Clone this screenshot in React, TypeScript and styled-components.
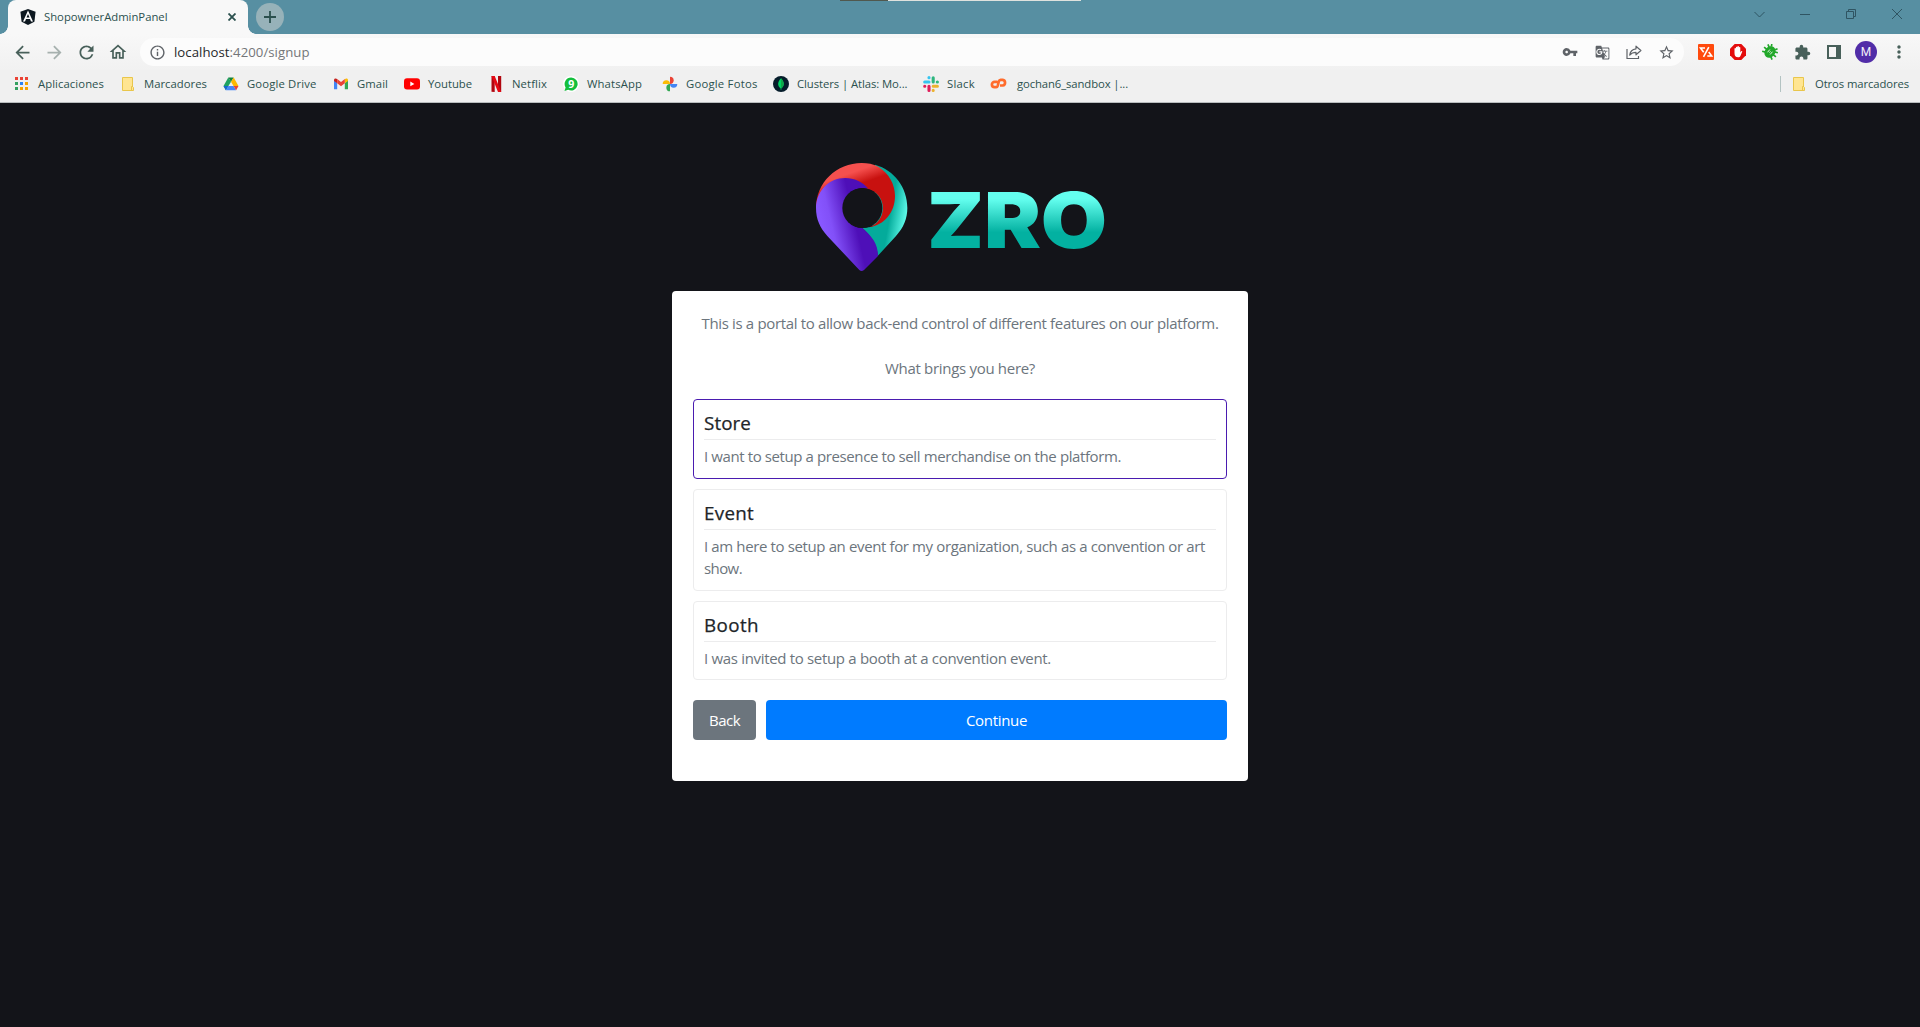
import React, { useLayoutEffect, useRef, useState } from "react";
import styled, { createGlobalStyle, css } from "styled-components";
import {
  MdArrowBack,
  MdArrowForward,
  MdRefresh,
  MdOutlineHome,
  MdInfoOutline,
  MdVpnKey,
  MdGTranslate,
  MdStarBorder,
  MdExtension,
  MdMoreVert,
} from "react-icons/md";

const GlobalStyle = createGlobalStyle`
  * { box-sizing: border-box; }
  body {
    margin: 0;
    background: #131419;
    font-family: "Open Sans", "Noto Sans", sans-serif;
  }
`;

/* Text tracked so that it fills a given width */
const TrackedSpan = styled.span`
  display: inline-block;
  white-space: nowrap;
`;

function Tracked({ width, children }: { width: number; children: React.ReactNode }) {
  const ref = useRef<HTMLSpanElement>(null);
  const [spacing, setSpacing] = useState(0);
  useLayoutEffect(() => {
    const el = ref.current;
    if (!el) return;
    const count = (el.textContent || "").length;
    setSpacing((width - el.getBoundingClientRect().width) / count);
  }, [width]);
  return (
    <TrackedSpan ref={ref} style={{ letterSpacing: `${spacing}px` }}>
      {children}
    </TrackedSpan>
  );
}

const Window = styled.div`
  display: flex;
  flex-direction: column;
  width: 1920px;
  height: 1027px;
  overflow: hidden;
  position: relative;
`;

/* ---------- browser chrome ---------- */

const TabStrip = styled.div`
  display: flex;
  align-items: flex-end;
  height: 34px;
  padding-left: 8px;
  background: #578fa2;
`;

const Tab = styled.div`
  position: relative;
  display: flex;
  align-items: center;
  width: 240px;
  height: 34px;
  padding: 0 8px 0 12px;
  border-radius: 8px 8px 0 0;
  background: #f8f8f8;
  font-size: 11.3px;
  color: #2b504e;

  &::before,
  &::after {
    content: "";
    position: absolute;
    bottom: 0;
    width: 8px;
    height: 8px;
  }
  &::before {
    left: -8px;
    background: radial-gradient(circle at 0 0, transparent 7.5px, #f8f8f8 8px);
  }
  &::after {
    right: -8px;
    background: radial-gradient(circle at 100% 0, transparent 7.5px, #f8f8f8 8px);
  }
`;

const TabTitle = styled.div`
  flex: 1;
  margin-left: 8px;
  line-height: 34px;
`;

const CloseSlot = styled.div`
  display: flex;
  width: 16px;
  justify-content: center;
`;

const NewTab = styled.div`
  display: flex;
  align-items: center;
  justify-content: center;
  width: 28px;
  height: 28px;
  margin: 0 0 3px 8px;
  border-radius: 50%;
  background: #97b2b9;
`;

const WindowControls = styled.div`
  display: flex;
  height: 28px;
  margin: 0 0 auto auto;
`;

const Control = styled.div`
  display: flex;
  align-items: center;
  justify-content: center;
  width: 46px;
`;

const ScreenEdge = styled.div`
  position: absolute;
  top: 0;
  left: 840px;
  width: 241px;
  height: 1px;
  background: linear-gradient(90deg, #50584e 48px, #dfe2de 48px);
`;

const Toolbar = styled.div`
  display: flex;
  align-items: center;
  height: 36px;
  padding: 0 5px 0 6px;
  background: linear-gradient(#f8f8f8, #f1f1f1);
  color: #48605a;
`;

const NavButton = styled.div<{ $dim?: boolean }>`
  display: flex;
  align-items: center;
  justify-content: center;
  width: 32px;
  height: 32px;
  opacity: ${(p) => (p.$dim ? 0.45 : 1)};
`;

const AddressBar = styled.div`
  display: flex;
  align-items: center;
  flex: 1;
  height: 28px;
  margin-left: 6px;
  padding: 0 2px 0 9px;
  border-radius: 14px;
  background: #fcfcfc;
  color: #5f6368;
`;

const Url = styled.div`
  flex: 1;
  margin-left: 8px;
  font-size: 13.2px;
  line-height: 28px;
  color: #747679;

  b {
    font-weight: 400;
    color: #27292b;
  }
`;

const Extensions = styled.div`
  display: flex;
  align-items: center;
  margin-left: 6px;
`;

const Avatar = styled.div`
  display: flex;
  align-items: center;
  justify-content: center;
  width: 22px;
  height: 22px;
  margin: 0 6px 0 5px;
  border-radius: 50%;
  background: #512da8;
  color: #f2eef8;
  font: 12px Roboto, sans-serif;
`;

const BookmarkBar = styled.div`
  display: flex;
  align-items: center;
  height: 33px;
  padding: 0 11px 4px 14px;
  border-bottom: 1px solid #b9bdbe;
  background: #f0f0f0;
  font-size: 11.3px;
  color: #2b504e;
`;

const BookmarkItem = styled.div<{ $pitch: number; $gap: number }>`
  display: flex;
  align-items: center;
  flex: none;
  gap: ${(p) => p.$gap}px;
  width: ${(p) => p.$pitch}px;
  height: 28px;

  svg { flex: none; }
  span { margin-top: -2px; }
`;

const BarDivider = styled.div`
  width: 1px;
  height: 16px;
  margin: 0 10px 0 auto;
  background: #b3c3c2;
`;

/* ---------- page ---------- */

const Page = styled.main`
  display: flex;
  flex: 1;
  flex-direction: column;
  align-items: center;
  padding-top: 47px;
  background: #131419;
  color: #6c757d;
  font-size: 15px;
`;

const Card = styled.section`
  display: flex;
  flex-direction: column;
  width: 576px;
  height: 490px;
  margin-top: 1px;
  padding: 21px 21px 0;
  border-radius: 4px;
  background: #fff;
`;

const Intro = styled.p`
  margin: 0 0 22px;
  line-height: 23px;
  text-align: center;
`;

const OptionList = styled.div`
  display: flex;
  flex-direction: column;
  gap: 10px;
  margin: -3px 0 20px;
`;

const OptionBox = styled.div<{ $selected?: boolean; $height: number }>`
  height: ${(p) => p.$height}px;
  padding: 10px;
  border: 1px solid ${(p) => (p.$selected ? "#4a1bb0" : "#ececed")};
  border-radius: 4px;
`;

const OptionTitle = styled.h2`
  height: 30px;
  margin: 0 0 5px;
  border-bottom: 1px solid #ececed;
  color: #212529;
  font-size: 18.8px;
  font-weight: 500;
  line-height: 27px;
  -webkit-text-stroke: 0.25px #212529;
`;

const OptionText = styled.div`
  line-height: 22px;
`;

const Actions = styled.div`
  display: flex;
  gap: 10px;
`;

const buttonBase = css`
  height: 40px;
  padding: 0;
  border: 0;
  border-radius: 4px;
  color: #fff;
  font: 15px/40px "Open Sans", "Noto Sans", sans-serif;
`;

const BackButton = styled.button`
  ${buttonBase}
  width: 63px;
  background: #6c757d;
`;

const ContinueButton = styled.button`
  ${buttonBase}
  flex: 1;
  background: #007bff;
`;

/* ---------- drawings ---------- */

const AngularIcon = () => (
  <svg width="16" height="16" viewBox="0 0 16 16">
    <path d="M8 0l7.600 2.700-1.200 10L8 16l-6.400-3.300L.4 2.700z" fill="#0d1820" />
    <path d="M8 1.500L3 12.500h2l1-2.400h4l1 2.400h2zm1.500 7H6.500L8 4.900z" fill="#fff" />
  </svg>
);

const AppsIcon = () => (
  <svg width="16" height="16" viewBox="0 0 16 16">
    {["#ea4335", "#ea4335", "#ea4335", "#34a060", "#2a83f5", "#f5a300", "#34a060", "#f5a300", "#f5a300"].map((c, i) => (
      <rect key={i} x={1 + (i % 3) * 5} y={1 + Math.floor(i / 3) * 5} width="3" height="3" fill={c} />
    ))}
  </svg>
);

const FolderIcon = () => (
  <svg width="16" height="16" viewBox="0 0 16 16">
    <path d="M2.500 1.500h10v9l1 1v3h-11z" fill="#ffe591" stroke="#e9c64b" />
    <path d="M11.500 14v-3.500h1.500" fill="none" stroke="#e9c64b" />
  </svg>
);

const DriveIcon = () => (
  <svg width="16" height="16" viewBox="0 0 16 16">
    <path d="M5.300 1.500L.5 10l2.400 4.300L8 5.800z" fill="#1ea261" />
    <path d="M5.300 1.500h5.400L8 5.800z" fill="#11823b" />
    <path d="M10.700 1.500L15.500 10h-5L8 5.800z" fill="#fdb900" />
    <path d="M.5 10h4.900l-2.500 4.300z" fill="#1767d1" />
    <path d="M5.400 10h5.100l2.600 4.300H2.900z" fill="#4787f7" />
    <path d="M10.500 10h5l-2.400 4.300z" fill="#ea4335" />
  </svg>
);

const GmailIcon = () => (
  <svg width="16" height="16" viewBox="0 0 16 16">
    <path d="M1 4v9.200h3.200V7.100z" fill="#4285f4" />
    <path d="M15 4v9.200h-3.200V7.100z" fill="#34a853" />
    <path d="M1 4.100C1 2.400 2.700 2 4.200 3v4.300L1 5z" fill="#c5221f" />
    <path d="M15 4.100c0-1.700-1.700-2.100-3.200-1.100v4.300L15 5z" fill="#fbbc04" />
    <path d="M4.200 3L8 5.900 11.800 3v4.300L8 10.200 4.200 7.300z" fill="#ea4335" />
  </svg>
);

const YoutubeIcon = () => (
  <svg width="16" height="16" viewBox="0 0 16 16">
    <rect y="2.300" width="16" height="11.300" rx="3" fill="#f00" />
    <path d="M6.300 5.600v4.700l4.100-2.350z" fill="#fff" />
  </svg>
);

const NetflixIcon = () => (
  <svg width="16" height="16" viewBox="0 0 16 16">
    <path d="M3.500 0h3.200v16l-3.200-.2zM10 0h3.200v16H10z" fill="#b1060f" />
    <path d="M3.500 0h3.200l6.500 16H10z" fill="#e50914" />
  </svg>
);

const WhatsappIcon = () => (
  <svg width="16" height="16" viewBox="0 0 16 16">
    <circle cx="8" cy="8" r="8" fill="#fff" />
    <path d="M8.200 1.500a6.500 6.500 0 11-3 12.300L1.500 15l1.100-3.600A6.500 6.500 0 018.200 1.500z" fill="#14bf3d" />
    <text x="8.200" y="11.700" textAnchor="middle" fontFamily="Open Sans" fontSize="10.500" fontWeight="700" fill="#fff">
      9
    </text>
  </svg>
);

const PhotosIcon = () => (
  <svg width="16" height="16" viewBox="0 0 16 16">
    <path d="M8 .7a3.650 3.650 0 010 7.300z" fill="#ea4335" />
    <path d="M15.300 8a3.650 3.650 0 01-7.300 0z" fill="#4285f4" />
    <path d="M8 15.300a3.650 3.650 0 010-7.300z" fill="#34a853" />
    <path d="M.7 8a3.650 3.650 0 017.300 0z" fill="#fbbc04" />
  </svg>
);

const MongoIcon = () => (
  <svg width="16" height="16" viewBox="0 0 16 16">
    <circle cx="8" cy="8" r="8" fill="#061d2b" />
    <path d="M8 2.200c4 4 3.400 8 .3 10.200V14h-.6v-1.600C4.600 10.200 4 6.200 8 2.200z" fill="#00d563" />
    <path d="M8 2.200c3.800 4 3.300 8 0 10.200z" fill="#0fa94a" />
  </svg>
);

const SlackIcon = () => (
  <svg width="16" height="16" viewBox="0 0 16 16" strokeWidth="3.100" strokeLinecap="round" fill="none">
    <path d="M6 6H1.700M6 1.600v.1" stroke="#36c5f0" />
    <path d="M10.200 1.700V6M14.300 6h.1" stroke="#2eb67d" />
    <path d="M10.200 10.200h4.200M10.200 14.400v.1" stroke="#ecb22e" />
    <path d="M6 10.200v4.200M1.700 10.200h.1" stroke="#e01e5a" />
  </svg>
);

const CpanelIcon = () => (
  <svg width="17" height="16" viewBox="0 0 17 16" fill="none" stroke="#ff6c2c" strokeWidth="2.700">
    <path d="M7.500 5.800H4.600a2.700 2.700 0 000 5.400h1.600c1.100 0 1.300-.7 1.600-1.700l1-4c.3-1.100.8-1.700 1.800-1.700h2.100a2.900 2.900 0 010 5.700H10" />
  </svg>
);

const ShareIcon = () => (
  <svg width="18" height="18" viewBox="0 0 18 18" fill="none" stroke="#5f6368" strokeWidth="1.200">
    <path d="M2 6v9.500h11.500V13" />
    <path d="M11 3.200l4.900 4.300-4.900 4.300V9.300c-2.900 0-4.700.8-6.300 2.700.5-3.600 2.600-5.700 6.300-6.200z" strokeLinejoin="round" />
  </svg>
);

const ZeroExtension = () => (
  <svg width="16" height="16" viewBox="0 0 16 16">
    <rect width="16" height="16" rx="1" fill="#ff4a0d" />
    <path d="M7 4H2.500l3.200 4.200M10.800 3.200L5.500 12.800M9.300 12h4.400l-3-4" fill="none" stroke="#fff" strokeWidth="1.600" />
  </svg>
);

const AdblockIcon = () => (
  <svg width="16" height="16" viewBox="0 0 16 16">
    <path d="M4.700 0h6.600L16 4.700v6.600L11.300 16H4.700L0 11.300V4.700z" fill="#e40d0d" />
    <path
      d="M4.500 9V4.700a.7.7 0 011.400 0V3.400a.75.75 0 011.500 0v-.7a.75.75 0 011.500 0v.9a.7.7 0 011.400 0v5l.9-1.300c.5-.6 1.300-.2 1 .5l-1.700 3.900c-.5 1-1.200 1.500-2.400 1.500C5.600 13.200 4.500 12 4.500 9z"
      fill="#fff"
    />
  </svg>
);

const BugIcon = () => (
  <svg width="16" height="16" viewBox="0 0 16 16">
    <g transform="rotate(40 8 8)">
      <ellipse cx="8" cy="8" rx="5.200" ry="6.200" fill="#22a82a" />
      <path d="M1.500 3.500l4 2M14.500 3.500l-4 2M.3 8h15.400M1.500 12.500l4-2M14.500 12.500l-4-2M5.500 3L4.300.7M10.500 3L11.700.7" stroke="#22a82a" strokeWidth="1.700" />
      <path d="M6.300 6.200v3.600M9.700 6.200v3.600M8 7.200v1.600" stroke="#e5f5e4" strokeWidth="0.900" />
    </g>
  </svg>
);

const PanelIcon = () => (
  <svg width="14" height="14" viewBox="0 0 14 14">
    <path d="M0 0h14v14H0zM2 2v10h7V2z" fillRule="evenodd" fill="#48605a" />
  </svg>
);

const Logo = () => (
  <svg width="320" height="140" viewBox="0 0 960 420">
    <defs>
      <linearGradient id="red" gradientUnits="userSpaceOnUse" x1="150" y1="60" x2="180" y2="145">
        <stop offset="0.1" stopColor="#f5504e" />
        <stop offset="0.55" stopColor="#c8110f" />
      </linearGradient>
      <linearGradient id="purple" gradientUnits="userSpaceOnUse" x1="65" y1="215" x2="170" y2="190">
        <stop offset="0" stopColor="#8857ff" />
        <stop offset="0.25" stopColor="#8250f8" />
        <stop offset="0.9" stopColor="#4e0fb8" />
      </linearGradient>
      <linearGradient id="teal" gradientUnits="userSpaceOnUse" x1="255" y1="200" x2="322" y2="212">
        <stop offset="0.2" stopColor="#04ab9b" />
        <stop offset="0.95" stopColor="#62fdec" />
      </linearGradient>
      <linearGradient id="word" gradientUnits="userSpaceOnUse" x1="0" y1="120" x2="0" y2="296">
        <stop offset="0.15" stopColor="#64ffef" />
        <stop offset="0.72" stopColor="#03b1a1" />
      </linearGradient>
    </defs>
    <path
      d="M225 44C283 60 322 113 322 174c0 33-12 59-34 84l-55 60c0-30-20-60-46-84l30-4z"
      fill="url(#teal)"
    />
    <path
      d="M48 175C48 97 110 39 185 39c18 0 34 3 50 11 32 20 50 53 50 87 0 50-32 88-78 95a60 60 0 00-7-116L120 100z"
      fill="url(#red)"
    />
    <path
      d="M48 174c0-50 38-90 88-90 27 0 51 11 69 32a60 60 0 10-18 118c28 25 47 46 47 84l-42 42q-7 6-14 0L82 258c-22-25-34-50-34-84z"
      fill="url(#purple)"
    />
    <circle cx="187" cy="174" r="60" fill="#131419" />
    <g fontFamily="Inter, sans-serif" fontWeight="900" fontSize="230" fill="url(#word)">
      <text x="382" y="293" textLength="170" lengthAdjust="spacingAndGlyphs">Z</text>
      <text x="552" y="293" textLength="171" lengthAdjust="spacingAndGlyphs">R</text>
      <text x="722" y="293" textLength="199" lengthAdjust="spacingAndGlyphs">O</text>
    </g>
  </svg>
);

/* ---------- data ---------- */

const bookmarks = [
  { label: "Aplicaciones", width: 66, pitch: 106, Icon: AppsIcon },
  { label: "Marcadores", width: 63, pitch: 103, Icon: FolderIcon },
  { label: "Google Drive", width: 69.500, pitch: 110, Icon: DriveIcon },
  { label: "Gmail", width: 31, pitch: 71, Icon: GmailIcon },
  { label: "Youtube", width: 44, pitch: 84, Icon: YoutubeIcon },
  { label: "Netflix", width: 35, pitch: 75, Icon: NetflixIcon },
  { label: "WhatsApp", width: 55, pitch: 99, Icon: WhatsappIcon },
  { label: "Google Fotos", width: 71.500, pitch: 111, Icon: PhotosIcon },
  { label: "Clusters | Atlas: Mo...", width: 110.500, pitch: 150, Icon: MongoIcon },
  { label: "Slack", width: 28, pitch: 67, Icon: SlackIcon },
  { label: "gochan6_sandbox |...", width: 111, pitch: 140, gap: 10, Icon: CpanelIcon },
];

const options = [
  {
    title: "Store",
    titleWidth: 47,
    height: 80,
    selected: true,
    lines: [{ text: "I want to setup a presence to sell merchandise on the platform.", width: 417 }],
  },
  {
    title: "Event",
    titleWidth: 50,
    height: 102,
    lines: [
      { text: "I am here to setup an event for my organization, such as a convention or art", width: 501 },
      { text: "show.", width: 38 },
    ],
  },
  {
    title: "Booth",
    titleWidth: 55,
    height: 79,
    lines: [{ text: "I was invited to setup a booth at a convention event.", width: 347 }],
  },
];

export default function App() {
  return (
    <>
      <GlobalStyle />
      <Window>
        <TabStrip>
          <Tab>
            <AngularIcon />
            <TabTitle>
              <Tracked width={123.500}>ShopownerAdminPanel</Tracked>
            </TabTitle>
            <CloseSlot>
              <svg width="8" height="8" viewBox="0 0 8 8" stroke="#2b504e" strokeWidth="1.800">
                <path d="M.5.5l7 7M7.500.5l-7 7" />
              </svg>
            </CloseSlot>
          </Tab>
          <NewTab>
            <svg width="12" height="12" viewBox="0 0 12 12" stroke="#2b504e" strokeWidth="1.800">
              <path d="M6 0v12M0 6h12" />
            </svg>
          </NewTab>
          <WindowControls>
            <Control>
              <svg width="11" height="11" viewBox="0 0 11 11" fill="none" stroke="#2f5462">
                <path d="M.5 3l5 5 5-5" />
              </svg>
            </Control>
            <Control>
              <svg width="10" height="10" viewBox="0 0 10 10" fill="none" stroke="#2f5462">
                <path d="M0 5.500h10" />
              </svg>
            </Control>
            <Control>
              <svg width="10" height="10" viewBox="0 0 10 10" fill="none" stroke="#2f5462">
                <path d="M.5 2.500h7v7h-7zM2.500 2.500v-2h7v7h-2" />
              </svg>
            </Control>
            <Control>
              <svg width="10" height="10" viewBox="0 0 10 10" fill="none" stroke="#2f5462">
                <path d="M0 0l10 10M10 0L0 10" />
              </svg>
            </Control>
          </WindowControls>
        </TabStrip>
        <ScreenEdge />

        <Toolbar>
          <NavButton><MdArrowBack size={21} /></NavButton>
          <NavButton $dim><MdArrowForward size={21} /></NavButton>
          <NavButton><MdRefresh size={21} /></NavButton>
          <NavButton><MdOutlineHome size={20} /></NavButton>
          <AddressBar>
            <MdInfoOutline size={17} />
            <Url>
              <Tracked width={135.500}>
                <b>localhost</b>:4200/signup
              </Tracked>
            </Url>
            <NavButton><MdVpnKey size={16} /></NavButton>
            <NavButton><MdGTranslate size={15} /></NavButton>
            <NavButton><ShareIcon /></NavButton>
            <NavButton><MdStarBorder size={17} /></NavButton>
          </AddressBar>
          <Extensions>
            <NavButton><ZeroExtension /></NavButton>
            <NavButton><AdblockIcon /></NavButton>
            <NavButton><BugIcon /></NavButton>
            <NavButton><MdExtension size={17} /></NavButton>
            <NavButton><PanelIcon /></NavButton>
            <Avatar>M</Avatar>
            <NavButton><MdMoreVert size={20} /></NavButton>
          </Extensions>
        </Toolbar>

        <BookmarkBar>
          {bookmarks.map(({ label, width, pitch, gap, Icon }) => (
            <BookmarkItem key={label} $pitch={pitch} $gap={gap ?? 8}>
              <Icon />
              <Tracked width={width}>{label}</Tracked>
            </BookmarkItem>
          ))}
          <BarDivider />
          <BookmarkItem $pitch={118} $gap={8}>
            <FolderIcon />
            <Tracked width={94}>Otros marcadores</Tracked>
          </BookmarkItem>
        </BookmarkBar>

        <Page>
          <Logo />
          <Card>
            <Intro>
              <Tracked width={517}>
                This is a portal to allow back-end control of different features on our platform.
              </Tracked>
            </Intro>
            <Intro>
              <Tracked width={150}>What brings you here?</Tracked>
            </Intro>
            <OptionList>
              {options.map((o) => (
                <OptionBox key={o.title} $height={o.height} $selected={o.selected}>
                  <OptionTitle>
                    <Tracked width={o.titleWidth}>{o.title}</Tracked>
                  </OptionTitle>
                  {o.lines.map((l) => (
                    <OptionText key={l.text}>
                      <Tracked width={l.width}>{l.text}</Tracked>
                    </OptionText>
                  ))}
                </OptionBox>
              ))}
            </OptionList>
            <Actions>
              <BackButton>
                <Tracked width={31}>Back</Tracked>
              </BackButton>
              <ContinueButton>
                <Tracked width={61}>Continue</Tracked>
              </ContinueButton>
            </Actions>
          </Card>
        </Page>
      </Window>
    </>
  );
}
